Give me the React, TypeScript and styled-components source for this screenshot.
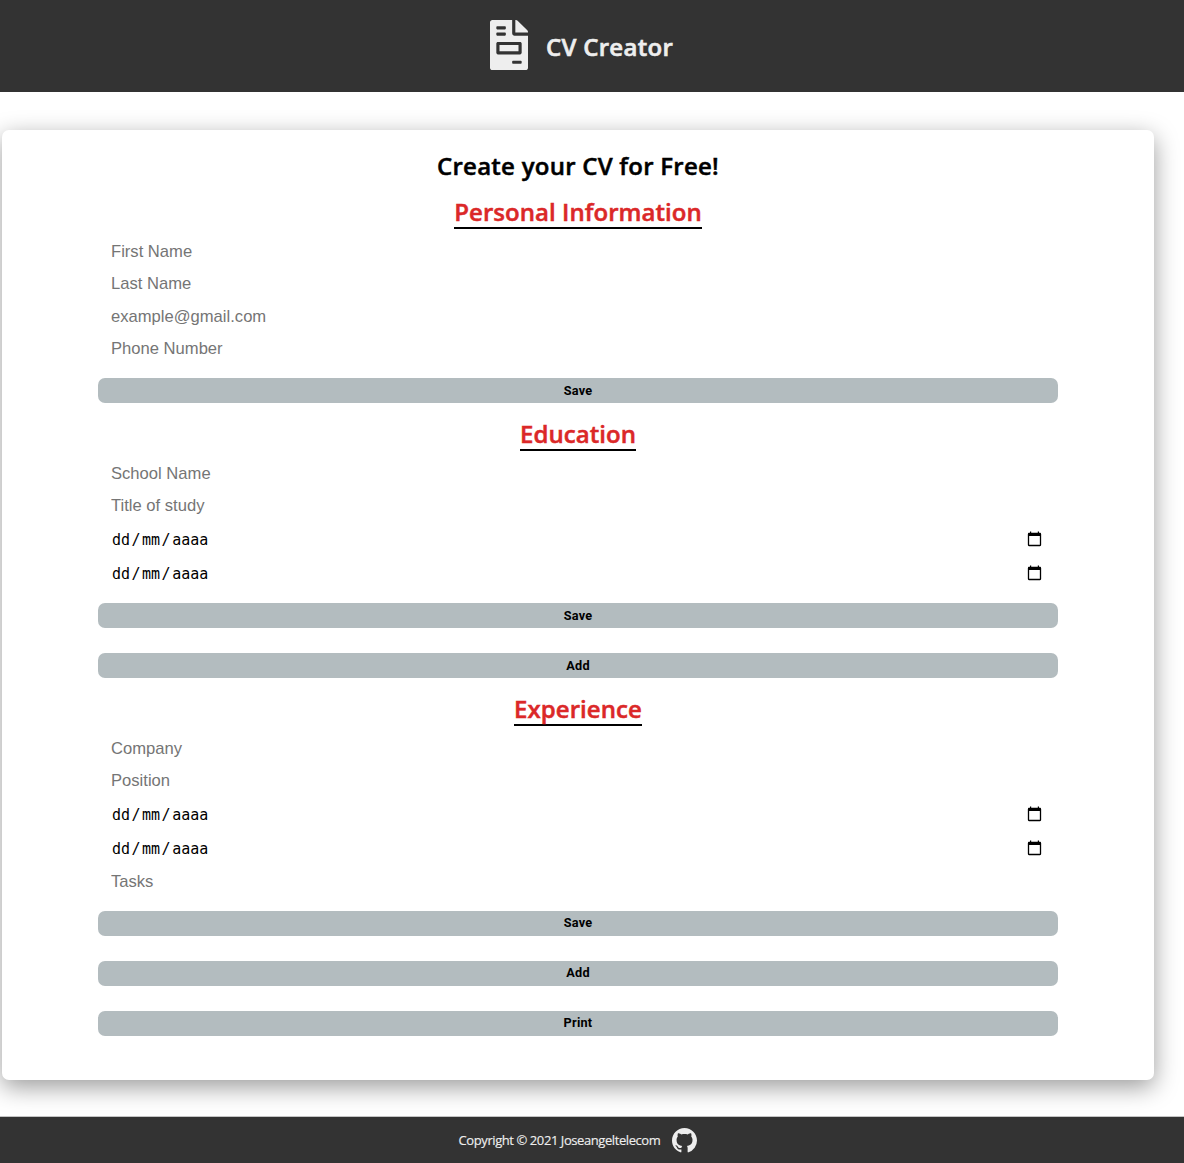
import React from "react";
import styled, { createGlobalStyle } from "styled-components";

const Global = createGlobalStyle`
  * { box-sizing: border-box; }
  body { margin: 0; background: #fff; font-family: "Open Sans", "Noto Sans", sans-serif; }
`;
const Page = styled.div`
  display: flex; flex-direction: column; height: 1163px; overflow: hidden;
`;
const Header = styled.header`
  height: 92px; flex: none; background: #333; color: #eee;
  display: flex; justify-content: center; padding: 20px 21px 0 0; gap: 18px;
`;
const Brand = styled.h1`
  margin: 9px 0 0; font-size: 24px; line-height: 36px; font-weight: 600;
  letter-spacing: .3px; white-space: nowrap; -webkit-text-stroke: 0.6px;
`;
const Card = styled.main`
  width: 1152px; height: 950px; flex: none; margin: 38px 0 37px 2px; padding: 19px 96px 0;
  border-radius: 7px; background: #fff; box-shadow: 0 7px 25px rgba(0,0,0,.4);
  display: flex; flex-direction: column;
`;
const Title = styled.h2`
  margin: 0 0 12px; text-align: center; font-size: 24px; line-height: 34px; font-weight: 600;
  letter-spacing: .25px; -webkit-text-stroke: 0.5px; white-space: nowrap;
`;
const Section = styled.section`
  display: flex; flex-direction: column;
`;
const Heading = styled.h2<{ $w: number }>`
  align-self: center; width: ${p => p.$w}px; height: 34px; margin: 0 0 7px;
  display: flex; justify-content: center; border-bottom: 2px solid #000; color: #db2828;
  font-size: 24px; line-height: 34px; font-weight: 600; letter-spacing: .05px;
  -webkit-text-stroke: 0.5px; white-space: nowrap;
`;
const Field = styled.input`
  height: 32.3px; border: 0; outline: 0; padding: 0 13px; background: transparent;
  font: 16.6px "Liberation Sans", Arial, sans-serif;
  &::placeholder { color: #757575; opacity: 1; }
`;
const DateRow = styled.div`
  height: 34px; display: flex; justify-content: space-between; align-items: center;
  padding: 0 16px 0 14px; font: 15px "DejaVu Sans Mono", monospace; color: #000;
`;
const DateText = styled.span`display: flex;`;
const Slash = styled.span`width: 12px; text-align: center;`;
const CalendarIcon = styled.svg`display: block; flex: none; margin-bottom: 2px;`;
const Button = styled.button<{ $top: number; $raise?: number }>`
  height: 25px; flex: none; margin: ${p => p.$top}px 0 0; padding: 0 0 ${p => p.$raise ?? 0}px;
  border: 0; border-radius: 7px; background: #b3bcbf; color: #000;
  font: 700 12.7px/${p => 25 - (p.$raise ?? 0)}px Roboto, sans-serif; letter-spacing: .25px;
`;
const Gap = styled.div`height: 14px; flex: none;`;
const Footer = styled.footer`
  height: 46px; flex: none; background: #333; color: #eee; display: flex; align-items: center;
  justify-content: center; gap: 12px; padding-right: 28px; font-size: 13px;
  box-shadow: 0 -1px #c4c4c4;
`;
const Copy = styled.span`letter-spacing: -.42px; white-space: nowrap; -webkit-text-stroke: .15px;`;

const DateField = () => (
  <DateRow>
    <DateText><span>dd</span><Slash>/</Slash><span>mm</span><Slash>/</Slash><span>aaaa</span></DateText>
    <CalendarIcon width="15" height="16" viewBox="0 0 15 16">
      <path d="M1.5 3v11a.5.5 0 0 0 .5.5h11a.5.5 0 0 0 .5-.5V3" fill="none" stroke="#000" strokeWidth="1.3" />
      <path d="M1 2.500q0-.8.8-.8h11.400q.8 0 .8.8V5H1zM3 .5h1.200V2H3zM10.800.5H12V2h-1.200z" />
    </CalendarIcon>
  </DateRow>
);

export default function App() {
  return (
    <Page>
      <Global />
      <Header>
        <svg width="38" height="50" viewBox="0 0 384 512" preserveAspectRatio="none" fill="#eee">
          <path d="M288 256H96v64h192v-64zm89-151L279.100 7c-4.500-4.500-10.600-7-17-7H256v128h128v-6.100c0-6.300-2.500-12.400-7-16.900zm-153 31V0H24C10.700 0 0 10.700 0 24v464c0 13.300 10.700 24 24 24h336c13.300 0 24-10.700 24-24V160H248c-13.200 0-24-10.800-24-24zM64 72c0-4.420 3.580-8 8-8h80c4.420 0 8 3.580 8 8v16c0 4.420-3.580 8-8 8H72c-4.420 0-8-3.580-8-8V72zm0 64c0-4.420 3.580-8 8-8h80c4.420 0 8 3.580 8 8v16c0 4.420-3.580 8-8 8H72c-4.420 0-8-3.580-8-8v-16zm256 304c0 4.420-3.580 8-8 8h-80c-4.420 0-8-3.580-8-8v-16c0-4.420 3.580-8 8-8h80c4.420 0 8 3.580 8 8v16zm0-200v96c0 8.840-7.160 16-16 16H80c-8.840 0-16-7.160-16-16v-96c0-8.840 7.160-16 16-16h224c8.840 0 16 7.160 16 16z" />
        </svg>
        <Brand>CV Creator</Brand>
      </Header>
      <Card>
        <Title>Create your CV for Free!</Title>
        <Section>
          <Heading $w={248}>Personal Information</Heading>
          <Field placeholder="First Name" />
          <Field placeholder="Last Name" />
          <Field placeholder="example@gmail.com" />
          <Field placeholder="Phone Number" />
          <Button $top={12.8}>Save</Button>
        </Section>
        <Gap />
        <Section>
          <Heading $w={116}>Education</Heading>
          <Field placeholder="School Name" />
          <Field placeholder="Title of study" />
          <DateField />
          <DateField />
          <Button $top={12.4}>Save</Button>
          <Button $top={25}>Add</Button>
        </Section>
        <Gap />
        <Section>
          <Heading $w={128}>Experience</Heading>
          <Field placeholder="Company" />
          <Field placeholder="Position" />
          <DateField />
          <DateField />
          <Field placeholder="Tasks" />
          <Button $top={13.1} $raise={2}>Save</Button>
          <Button $top={25} $raise={2}>Add</Button>
          <Button $top={25} $raise={2}>Print</Button>
        </Section>
      </Card>
      <Footer>
        <Copy>Copyright © 2021 Joseangeltelecom</Copy>
        <svg width="25" height="25" viewBox="0 0 16 16" fill="#eee">
          <path d="M8 0C3.580 0 0 3.580 0 8c0 3.540 2.290 6.530 5.470 7.590.4.070.55-.17.55-.38 0-.19-.01-.82-.01-1.490-2.010.37-2.530-.49-2.690-.94-.09-.23-.48-.94-.82-1.130-.28-.15-.68-.52-.01-.53.63-.01 1.080.58 1.230.82.72 1.210 1.870.87 2.330.66.07-.52.28-.87.51-1.070-1.780-.2-3.640-.89-3.640-3.950 0-.87.31-1.590.82-2.150-.08-.2-.36-1.020.08-2.120 0 0 .67-.21 2.200.82.64-.18 1.320-.27 2-.27s1.360.09 2 .27c1.530-1.040 2.200-.82 2.200-.82.44 1.100.16 1.920.08 2.120.51.56.82 1.270.82 2.150 0 3.070-1.870 3.750-3.650 3.950.29.25.54.73.54 1.480 0 1.070-.01 1.930-.01 2.200 0 .21.15.46.55.38A8.010 8.010 0 0 0 16 8c0-4.420-3.580-8-8-8z" />
        </svg>
      </Footer>
    </Page>
  );
}
